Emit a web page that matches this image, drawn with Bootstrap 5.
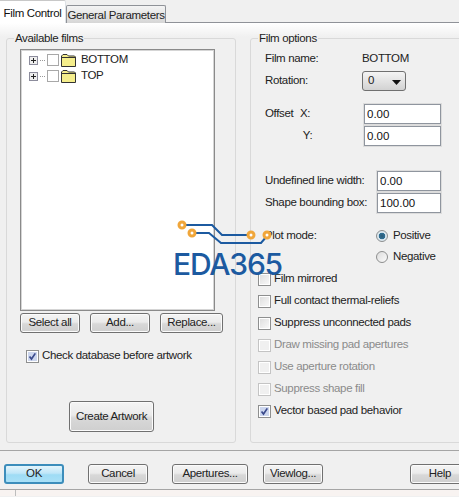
<!DOCTYPE html>
<html>
<head>
    <title>Film Control</title>
    <meta charset="utf-8">
    <link href="https://cdn.jsdelivr.net/npm/bootstrap@5.3.3/dist/css/bootstrap.min.css" rel="stylesheet">
    <script src="https://cdn.jsdelivr.net/npm/bootstrap@5.3.3/dist/js/bootstrap.bundle.min.js"></script>
    <style>
        html, body {height: 100%;}
        body {background-color: #f0f0f0; color: #222; font-family: "Liberation Sans", Arial, sans-serif; font-size: 11.5px; letter-spacing: -.35px; line-height: 1; overflow: hidden; position: relative; width: 459px; height: 497px; white-space: nowrap;}

        .tab-strip.nav-tabs {height: 23px; border-bottom: 1px solid #8f9298; align-items: flex-end; flex-wrap: nowrap;}
        .tab-strip .nav-link {font-size: 11.5px; color: #222; padding: 0; margin: 0 0 -1px 0; border-radius: 2px 2px 0 0; border: 1px solid #8f9298; border-bottom: 0; height: 18px; width: 100px; line-height: 18px; text-align: center; background: linear-gradient(#f4f4f4, #d6d6d6);}
        .tab-strip .nav-link.active {height: 23px; width: 66px; line-height: 24px; background: #fff; color: #111; border-left: 0; border-top-color: #c8c8c8; margin-bottom: -1px; border-radius: 0 2px 0 0;}

        .tab-body {height: 428px; padding: 8px 0 0 6px; gap: 14px; background: linear-gradient(#fff 0, #f0f0f0 14px); border-bottom: 1px solid #a5a5a5; overflow: hidden;}
        .film-group {border: 1px solid #d9d9d9; border-radius: 3px; margin: 0; height: 412px; position: relative; flex: none;}
        .film-group legend {float: none; width: auto; font-size: 11.5px; line-height: 14px; margin: 0 0 0 -6px; padding: 0 1px; color: #222;}
        .left-group {width: 230px; padding: 0 0 0 13px;}
        .right-group {width: 225px; padding: 3px 0 0 14px;}
        .right-group legend {margin-left: -7px;}

        .film-tree {width: 195px; height: 262px; margin-top: 4px; background: #fff; border: 1px solid #8a8a8a; outline: 1px solid #d5d5d5; outline-offset: -2px; padding: 2px 0 0 8px;}
        .tree-row {height: 16px; gap: 2px;}
        .tree-name {margin-left: 3px; color: #222;}
        .tree-link {width: 5px; border-top: 1px dotted #999;}

        .win-btn.btn {font-size: 11.5px; letter-spacing: -.35px; line-height: 1; padding: 0; height: 20px; border: 1px solid #707070; border-radius: 3px; color: #222; background: linear-gradient(#f4f4f4 0, #ebebeb 45%, #d8d8d8 55%, #cfcfcf 100%); box-shadow: inset 0 0 0 1px #fbfbfb;}
        .wide-60 {width: 60px;}
        .wide-64 {width: 63px;}
        .film-buttons {gap: 10px; margin-top: 2px;}
        .create-btn.btn {width: 85px; height: 31px; margin: 38px 0 0 49px; display: block;}

        .ok-btn.btn {background: linear-gradient(#e4f5fc 0, #bfe6f8 45%, #9edcf5 55%, #a9e0f7 100%); border: 2px solid #3c8dbb; box-shadow: none;}
        .dialog-foot {height: 39px; padding: 13px 0 0 4px; border-bottom: 1px solid #a5a5a5;}
        .dialog-foot .btn {flex: none;}
        .apert-btn {width: 76px;}
        .gap-24 {margin-left: 24px;}
        .gap-15 {margin-left: 15px;}
        .help-btn {margin-left: 87px;}
        .bottom-strip {height: 6px; background: #f8f3f1; padding-left: 15px;}
        .bottom-tick {width: 1px; height: 6px; background: #bdbdbd;}

        .opt-row {height: 22px;}
        .opt-short {height: 21px;}
        .opt-gap-13 {margin-top: 11px;}
        .opt-gap-22 {margin-top: 23px;}
        .opt-gap-11 {margin-top: 11px;}
        .label-name {width: 97px;}
        .label-offset {width: 35px;}
        .label-axis {width: 64px;}
        .label-long {width: 112px;}
        .label-plot {width: 111px;}
        .win-input.form-control {font-size: 11.5px; line-height: 1; border-radius: 0; padding: 0 0 0 2px; height: 20px; min-height: 0; color: #111; border: 1px solid #8f959e; outline: 1px solid #dcdcdc; background: #fff;}
        .input-77 {width: 77px;}
        .input-64 {width: 64px;}
        .win-select.form-select {width: 44px; height: 20px; font-size: 11.5px; line-height: 1; padding: 0 0 0 5px; border: 1px solid #707070; border-radius: 3px; color: #222; min-height: 0; background-color: #e2e2e2; background-image: url("data:image/svg+xml,%3Csvg xmlns='http://www.w3.org/2000/svg' width='9' height='5'%3E%3Cpath d='M0 0h9L4.5 5z' fill='%23111'/%3E%3C/svg%3E"), linear-gradient(#f4f4f4, #d2d2d2); background-repeat: no-repeat; background-position: 29px 8px, 0 0; background-size: 9px 5px, 100% 100%;}

        .opt-box.form-check-input {width: 13px; height: 13px; margin: 0; flex: none; border: 1px solid #8e8f8f; border-radius: 0; background-color: #f1f1f1; background-image: linear-gradient(135deg, #dcdcdc, #fbfbfb); outline: 1px solid #fff; outline-offset: -2px;}
        .opt-box.form-check-input:checked {border-color: #8e8f8f; background-color: #ccd6ee; background-image: url("data:image/svg+xml,%3Csvg xmlns='http://www.w3.org/2000/svg' width='13' height='13'%3E%3Cpath d='M3 6.5l2.3 3L9.8 2.8' fill='none' stroke='%233a4a8c' stroke-width='2'/%3E%3C/svg%3E");}
        .opt-box.form-check-input:disabled {opacity: 1; border-color: #c4c4c4; background-image: none; background-color: #f0f0f0;}
        .opt-box[type=radio].form-check-input {border-radius: 50%; width: 12px; height: 12px; outline: 0; background-color: #e6e6e6;}
        .opt-box[type=radio].form-check-input:checked {background-image: radial-gradient(circle, #2c5a76 0, #2f6f94 3px, #dbe8f0 3.6px); background-color: #dbe8f0;}
        .opt-label {margin-left: 3px; color: #222;}
        .opt-off {color: #8b8b8b;}
        .radio-label {margin-left: 5px;}
        .checks-start {margin-left: -7px;}
        .check-db {margin: 16px 0 0 6px; height: 14px;}

        .eda-logo {position: absolute; left: 170px; top: 216px; width: 125px; height: 34px; pointer-events: none;}
        .eda-word {position: absolute; left: 173px; top: 249px; font-family: Inter, "Liberation Sans", sans-serif; font-size: 30px; font-weight: 500; letter-spacing: -1.2px; line-height: 30px; color: #1c5aa0;}
    </style>
</head>
<body>
    <ul class="nav nav-tabs tab-strip">
        <li class="nav-item"><a class="nav-link active" href="#">Film Control</a></li>
        <li class="nav-item"><a class="nav-link" href="#">General Parameters</a></li>
    </ul>

    <div class="d-flex tab-body">
        <fieldset class="film-group left-group">
            <legend>Available films</legend>
            <div class="film-tree">
                <div class="d-flex align-items-center tree-row">
                    <svg width="9" height="9" viewBox="0 0 9 9"><rect x=".5" y=".5" width="8" height="8" fill="#eee" stroke="#8c8c9c"/><path d="M2 4.5h5M4.500 2v5" stroke="#222"/></svg>
                    <span class="tree-link"></span>
                    <svg width="12" height="12" viewBox="0 0 12 12"><rect x=".5" y=".5" width="11" height="11" fill="#fff" stroke="#a8a8a8"/></svg>
                    <svg width="15" height="13" viewBox="0 0 15 13"><path d="M.5 12.5V2L2 .5h4L7.5 2h6l1 1v9.500z" fill="#f5ee8c" stroke="#333"/><path d="M1 3.500h13" stroke="#333"/></svg>
                    <span class="tree-name">BOTTOM</span>
                </div>
                <div class="d-flex align-items-center tree-row">
                    <svg width="9" height="9" viewBox="0 0 9 9"><rect x=".5" y=".5" width="8" height="8" fill="#eee" stroke="#8c8c9c"/><path d="M2 4.5h5M4.500 2v5" stroke="#222"/></svg>
                    <span class="tree-link"></span>
                    <svg width="12" height="12" viewBox="0 0 12 12"><rect x=".5" y=".5" width="11" height="11" fill="#fff" stroke="#a8a8a8"/></svg>
                    <svg width="15" height="13" viewBox="0 0 15 13"><path d="M.5 12.5V2L2 .5h4L7.5 2h6l1 1v9.500z" fill="#f5ee8c" stroke="#333"/><path d="M1 3.500h13" stroke="#333"/></svg>
                    <span class="tree-name">TOP</span>
                </div>
            </div>
            <div class="d-flex film-buttons">
                <button class="btn win-btn wide-60">Select all</button>
                <button class="btn win-btn wide-60">Add...</button>
                <button class="btn win-btn wide-64">Replace...</button>
            </div>
            <div class="d-flex align-items-center check-db">
                <input class="form-check-input opt-box" type="checkbox" checked>
                <span class="opt-label">Check database before artwork</span>
            </div>
            <button class="btn win-btn create-btn">Create Artwork</button>
        </fieldset>

        <fieldset class="film-group right-group">
            <legend>Film options</legend>
            <div class="d-flex align-items-center opt-row"><span class="label-name">Film name:</span><span>BOTTOM</span></div>
            <div class="d-flex align-items-center opt-row"><span class="label-name">Rotation:</span>
                <select class="form-select win-select"><option>0</option></select>
            </div>
            <div class="d-flex align-items-center opt-row opt-gap-13"><span class="label-offset">Offset</span><span class="label-axis">X:</span><input class="form-control win-input input-77" value="0.00"></div>
            <div class="d-flex align-items-center opt-row"><span class="label-offset"></span><span class="label-axis">&nbsp;Y:</span><input class="form-control win-input input-77" value="0.00"></div>
            <div class="d-flex align-items-center opt-row opt-gap-22"><span class="label-long">Undefined line width:</span><input class="form-control win-input input-64" value="0.00"></div>
            <div class="d-flex align-items-center opt-row"><span class="label-long">Shape bounding box:</span><input class="form-control win-input input-64" value="100.00"></div>
            <div class="d-flex align-items-center opt-row opt-short opt-gap-11"><span class="label-plot">Plot mode:</span><input class="form-check-input opt-box" type="radio" name="plot" checked><span class="radio-label">Positive</span></div>
            <div class="d-flex align-items-center opt-row"><span class="label-plot"></span><input class="form-check-input opt-box" type="radio" name="plot"><span class="radio-label">Negative</span></div>
            <div class="d-flex align-items-center opt-row checks-start"><input class="form-check-input opt-box" type="checkbox"><span class="opt-label">Film mirrored</span></div>
            <div class="d-flex align-items-center opt-row checks-start"><input class="form-check-input opt-box" type="checkbox"><span class="opt-label">Full contact thermal-reliefs</span></div>
            <div class="d-flex align-items-center opt-row checks-start"><input class="form-check-input opt-box" type="checkbox"><span class="opt-label">Suppress unconnected pads</span></div>
            <div class="d-flex align-items-center opt-row checks-start"><input class="form-check-input opt-box" type="checkbox" disabled><span class="opt-label opt-off">Draw missing pad apertures</span></div>
            <div class="d-flex align-items-center opt-row checks-start"><input class="form-check-input opt-box" type="checkbox" disabled><span class="opt-label opt-off">Use aperture rotation</span></div>
            <div class="d-flex align-items-center opt-row checks-start"><input class="form-check-input opt-box" type="checkbox" disabled><span class="opt-label opt-off">Suppress shape fill</span></div>
            <div class="d-flex align-items-center opt-row checks-start"><input class="form-check-input opt-box" type="checkbox" checked><span class="opt-label">Vector based pad behavior</span></div>
        </fieldset>
    </div>

    <div class="d-flex dialog-foot">
        <button class="btn win-btn ok-btn wide-60">OK</button>
        <button class="btn win-btn wide-60 gap-24">Cancel</button>
        <button class="btn win-btn apert-btn gap-24">Apertures...</button>
        <button class="btn win-btn wide-60 gap-15">Viewlog...</button>
        <button class="btn win-btn wide-60 help-btn">Help</button>
    </div>
    <div class="d-flex bottom-strip"><span class="bottom-tick"></span></div>

    <svg class="eda-logo" viewBox="170 216 125 34">
        <path d="M186 225h26l10 10h25M196 233h13l12 10h40l6-7" fill="none" stroke="#1c5aa0" stroke-width="2"/>
        <g fill="#fff" stroke="#f0a63a" stroke-width="3">
            <circle cx="182" cy="225" r="3"/>
            <circle cx="192" cy="233" r="3"/>
            <circle cx="251" cy="235" r="3"/>
            <circle cx="267" cy="235" r="3"/>
        </g>
    </svg>
    <span class="eda-word">EDA365</span>
</body>
</html>
